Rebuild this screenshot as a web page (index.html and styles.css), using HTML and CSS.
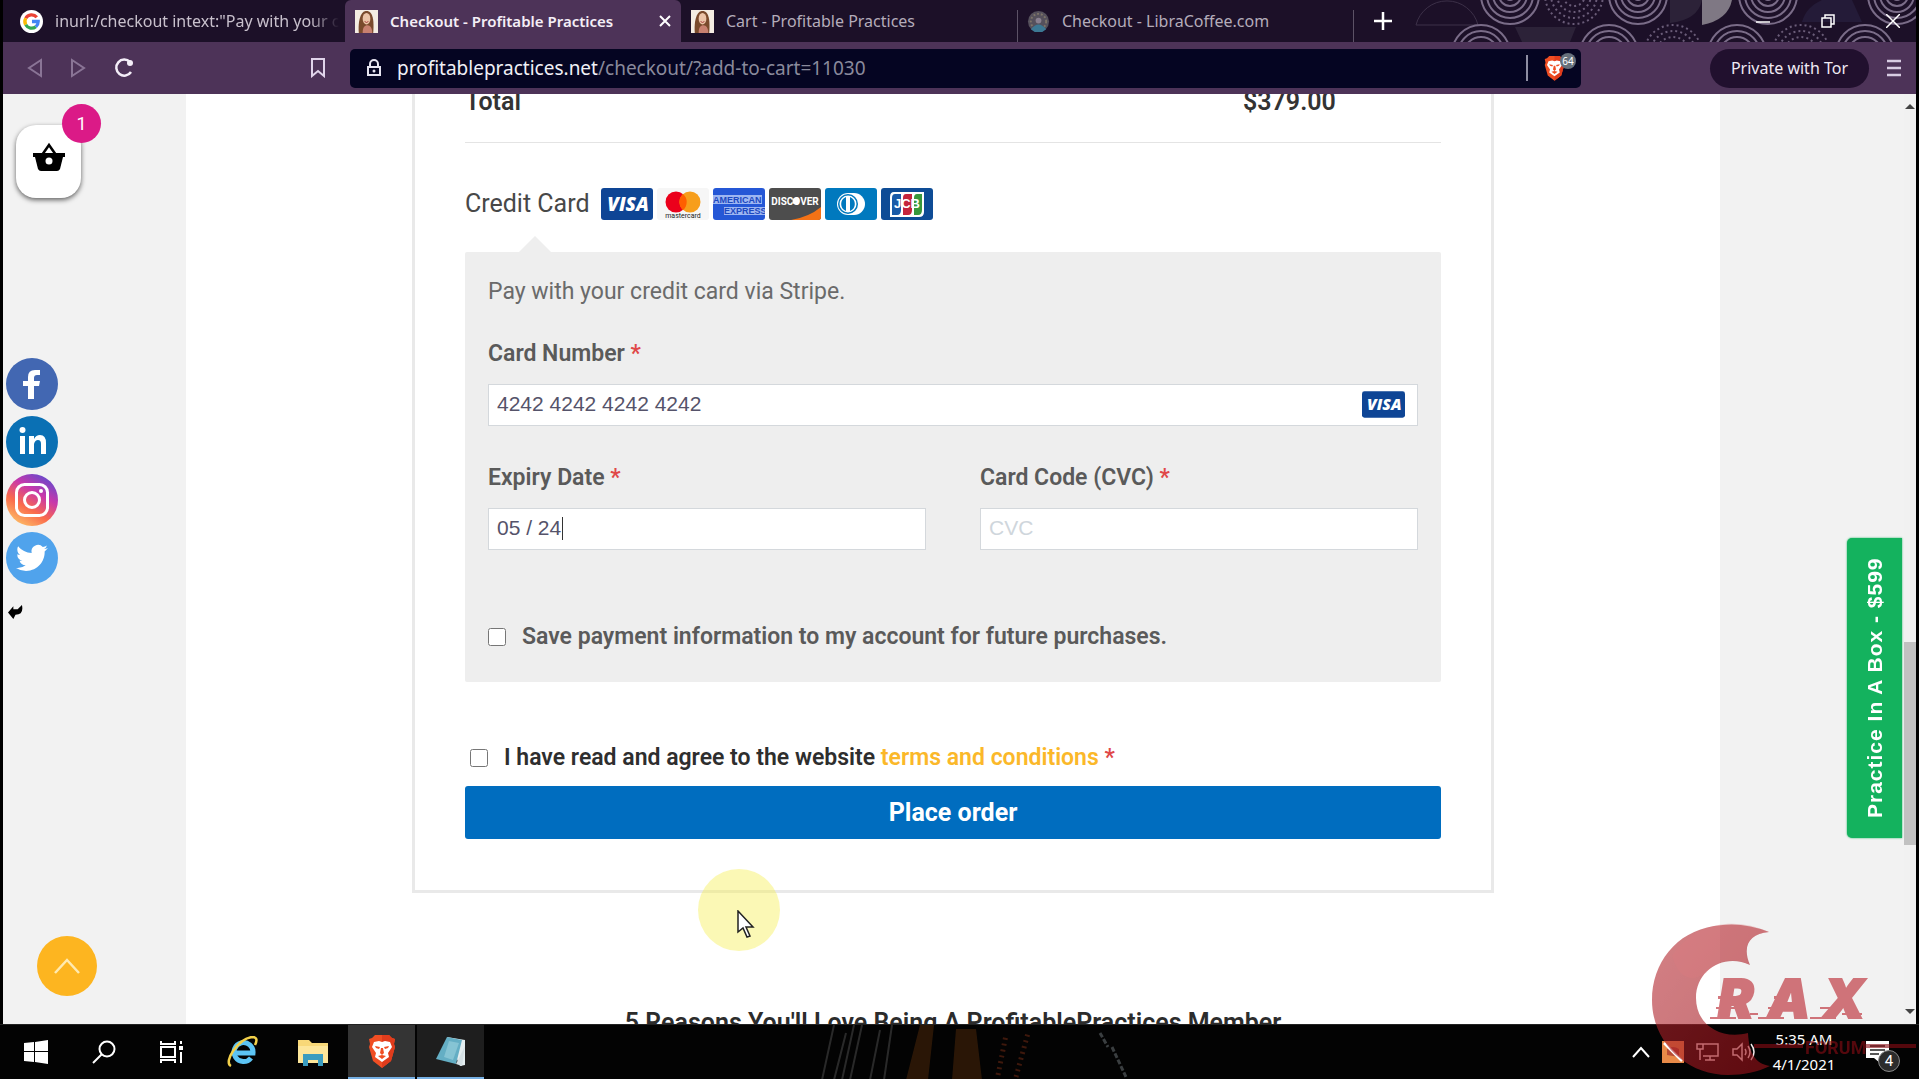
FILE: index.html
```html
<!DOCTYPE html>
<html lang="en">
<head>
  <meta charset="UTF-8">
  <meta name="viewport" content="width=device-width, initial-scale=1.0">
  <title>Checkout - Profitable Practices</title>
  <link rel="stylesheet" href="styles.css">
</head>
<body>
<!-- shared symbols -->
<svg class="defs" width="0" height="0" aria-hidden="true">
  <defs>
    <symbol id="portrait" viewBox="0 0 24 24">
      <rect width="24" height="24" fill="#f4ece2"/>
      <path d="M4 24C3 14 5 2 11 1c8-1 9 10 8 23z" fill="#7a4a2c"/>
      <ellipse cx="12" cy="9" rx="4" ry="6" fill="#ecc4a8"/>
      <path d="M8 24c0-6 2-8 5-8s5 3 5 8z" fill="#c88070"/>
      <path d="M10 12q2 2 4 0" stroke="#a03838" fill="none"/>
    </symbol>
    <symbol id="visa" viewBox="0 0 52 32">
      <rect width="52" height="32" rx="3" fill="#0e4595"/>
      <text x="27" y="23" text-anchor="middle" font-family="Open Sans, sans-serif" font-size="19" font-weight="800" font-style="italic" fill="#fff">VISA</text>
    </symbol>
    <symbol id="lion" viewBox="0 0 28 34">
      <path d="M7 1h14l3 3 3 1-1 5 1 3-4 14-9 7-9-7L1 13l1-3-1-5 3-1z" fill="#f04e23"/>
      <path d="M14 1h7l3 3 3 1-1 5 1 3-4 14-9 7z" fill="#e03c1c"/>
      <path d="M6 8l5-1 3 1 3-1 5 1 2 5-4 6 1 4-7 5-7-5 1-4-4-6z" fill="#fff"/>
      <path d="M7 12l5 1-1 2-3-1zM21 12l-5 1 1 2 3-1zM13 14l-1 5 2 2 2-2-1-5zM10 22l4-1 4 1-4 3z" fill="#f04e23"/>
    </symbol>
  </defs>
</svg>

<div class="desktop">
  <div class="browser">
    <nav class="tabs">
      <a class="tab" href="#">
        <svg class="favicon" viewBox="0 0 24 24">
          <circle cx="12" cy="12" r="12" fill="#fff"/>
          <g fill="none" stroke-width="3.4">
            <path d="M17.500 7.500A7 7 0 0 0 6 8.600" stroke="#ea4335"/>
            <path d="M6 8.600a7 7 0 0 0 0 6.800" stroke="#fbbc05"/>
            <path d="M6 15.400a7 7 0 0 0 10.500 2" stroke="#34a853"/>
            <path d="M16.500 17.400A7 7 0 0 0 19 12h-6.500" stroke="#4285f4"/>
          </g>
        </svg>
        <span class="tab-text fade">inurl:/checkout intext:"Pay with your cr</span>
      </a>
      <a class="tab active" href="#">
        <svg class="favicon"><use href="#portrait"/></svg>
        <span class="tab-text">Checkout - Profitable Practices</span>
        <svg class="tab-close" viewBox="0 0 12 12"><path d="M1 1l10 10M11 1L1 11" stroke="#fff" stroke-width="2"/></svg>
      </a>
      <a class="tab" href="#">
        <svg class="favicon"><use href="#portrait"/></svg>
        <span class="tab-text">Cart - Profitable Practices</span>
      </a>
      <a class="tab line" href="#">
        <svg class="favicon" viewBox="0 0 24 24">
          <circle cx="12" cy="12" r="11" fill="#55505c"/>
          <circle cx="12" cy="12" r="8" fill="none" stroke="#7d7468" stroke-width="2" stroke-dasharray="2 2"/>
          <path d="M4 20q8-10 16 0l-4 3H8z" fill="#3c7894"/>
          <circle cx="12" cy="11" r="3" fill="#8a8090"/>
        </svg>
        <span class="tab-text">Checkout - LibraCoffee.com</span>
      </a>
      <div class="strip line">
        <svg class="pattern" viewBox="0 0 564 42" preserveAspectRatio="xMaxYMid slice">
          <defs>
            <g id="rings" fill="none" stroke="#7a6c88" stroke-width="2"><circle r="29"/><circle r="23"/><circle r="17"/><circle r="11"/><circle r="5"/></g>
            <g id="dots" fill="none" stroke="#6a5c78" stroke-width="2" stroke-dasharray="2 3"><circle r="29"/><circle r="23"/><circle r="17"/><circle r="11"/></g>
          </defs>
          <path d="M64 25a32 32 0 0 1 62 0z" fill="none" stroke="#3c3048"/>
          <path d="M163 27h61l-6 15h-48zM318 0h32q-4 20-32 23z" fill="#2c2238"/>
          <path d="M350 25V0h30q-4 20-30 25z" fill="#7f7884"/>
          <path d="M450 22q4-15 20-22h30l10 22z" fill="#241b38"/>
          <use href="#rings" x="158" y="-5"/><use href="#dots" x="222" y="-5"/><use href="#rings" x="286" y="-5"/>
          <use href="#rings" x="416" y="-5"/><use href="#rings" x="545" y="-5"/>
          <use href="#rings" x="129" y="54"/><use href="#rings" x="257" y="54"/><use href="#dots" x="321" y="54"/>
          <use href="#rings" x="385" y="54"/><use href="#dots" x="449" y="54"/><use href="#rings" x="513" y="54"/>
        </svg>
        <button class="icon-btn" aria-label="New tab"><svg width="18" height="18" viewBox="0 0 18 18"><path d="M9 0v18M0 9h18" stroke="#fff" stroke-width="2.500"/></svg></button>
        <div class="window-btns">
          <button class="icon-btn" aria-label="Minimize"><svg width="14" height="14" viewBox="0 0 14 14"><path d="M0 8h14" stroke="#fff" stroke-width="1.500"/></svg></button>
          <button class="icon-btn" aria-label="Restore"><svg width="14" height="14" viewBox="0 0 14 14"><path d="M1 4h9v9H1zM4 4V1h9v9h-3" fill="none" stroke="#fff" stroke-width="1.500"/></svg></button>
          <button class="icon-btn" aria-label="Close"><svg width="14" height="14" viewBox="0 0 14 14"><path d="M0 0l14 14M14 0L0 14" stroke="#fff" stroke-width="1.500"/></svg></button>
        </div>
      </div>
    </nav>

    <div class="toolbar">
      <div class="nav-btns">
        <button class="icon-btn" aria-label="Back"><svg width="16" height="20" viewBox="0 0 16 20"><path d="M14 2v16L2 10z" fill="none" stroke="#8a7596" stroke-width="2"/></svg></button>
        <button class="icon-btn" aria-label="Forward"><svg width="16" height="20" viewBox="0 0 16 20"><path d="M2 2v16l12-8z" fill="none" stroke="#8a7596" stroke-width="2"/></svg></button>
        <button class="icon-btn" aria-label="Reload"><svg width="22" height="20" viewBox="0 0 22 20"><path d="M17 4A8 8 0 1 0 18 14" fill="none" stroke="#f4eef8" stroke-width="2.500"/><circle cx="17" cy="5" r="3" fill="#f4eef8"/></svg></button>
        <button class="icon-btn bookmark" aria-label="Bookmark"><svg width="14" height="20" viewBox="0 0 14 20"><path d="M1 1h12v17l-6-5-6 5z" fill="none" stroke="#e0d4ea" stroke-width="2"/></svg></button>
      </div>
      <div class="address">
        <svg width="16" height="18" viewBox="0 0 16 18"><path d="M4 7V5a4 4 0 0 1 8 0v2" fill="none" stroke="#e6e4f0" stroke-width="2"/><path d="M2 8h12v8H2z" fill="none" stroke="#e6e4f0" stroke-width="2"/><circle cx="8" cy="12" r="1.500" fill="#e6e4f0"/></svg>
        <span class="url"><b>profitablepractices.net</b>/checkout/?add-to-cart=11030</span>
        <div class="shield">
          <svg width="21" height="26"><use href="#lion"/></svg>
          <span class="shield-count">64</span>
        </div>
      </div>
      <div class="profile">
        <button class="tor">Private with Tor</button>
        <button class="icon-btn" aria-label="Menu"><svg width="14" height="18" viewBox="0 0 14 18"><path d="M0 2h14M0 9h14M0 16h14" stroke="#d8cce2" stroke-width="2.500"/></svg></button>
      </div>
    </div>

    <main class="page">
      <div class="content">
        <form class="order" onsubmit="return false">
          <div class="total"><span>Total</span><span class="amount">$379.00</span></div>

          <div class="method">
            <span>Credit Card</span>
            <div class="cards">
              <svg><use href="#visa"/></svg>
              <svg viewBox="0 0 52 32">
                <rect width="52" height="32" rx="3" fill="#f6f6f6"/>
                <circle cx="19" cy="14" r="10.500" fill="#eb001b"/><circle cx="33" cy="14" r="10.500" fill="#f79e1b"/>
                <path d="M26 6a10.500 10.500 0 0 1 0 16 10.500 10.500 0 0 1 0-16z" fill="#ff5f00"/>
                <text x="26" y="30" text-anchor="middle" font-family="Roboto, sans-serif" font-size="7" fill="#222">mastercard</text>
              </svg>
              <svg viewBox="0 0 52 32">
                <rect width="52" height="32" rx="3" fill="#2557d6"/>
                <path d="M0 7h49v9H0zM11 19h41v8H11z" fill="#9db6f2"/>
                <g font-family="Liberation Sans, sans-serif" font-size="9" font-weight="700" fill="#1c48c0">
                  <text x="0" y="15">AMERICAN</text><text x="11" y="26">EXPRESS</text>
                </g>
              </svg>
              <svg viewBox="0 0 52 32">
                <rect width="52" height="32" rx="3" fill="#4d4d4d"/>
                <path d="M22 32q18-3 30-13v10q0 3-3 3z" fill="#f47216"/>
                <text x="26" y="17" text-anchor="middle" font-family="Roboto, sans-serif" font-size="10" font-weight="700" fill="#fff">DISCOVER</text>
                <circle cx="27" cy="13" r="3.500" fill="#fff"/>
              </svg>
              <svg viewBox="0 0 52 32">
                <rect width="52" height="32" rx="3" fill="#0079be"/>
                <path d="M23 5h6a11 11 0 0 1 0 22h-6a11 11 0 0 1 0-22z" fill="#fff"/>
                <circle cx="23" cy="16" r="10" fill="#0079be"/><circle cx="23" cy="16" r="8.500" fill="#fff"/>
                <path d="M21 9a7.500 7.500 0 0 0 0 14zM25 9a7.500 7.500 0 0 1 0 14z" fill="#0079be"/>
              </svg>
              <svg viewBox="0 0 52 32">
                <rect width="52" height="32" rx="3" fill="#0e4c96"/>
                <path d="M13 4h30v20q0 5-5 5H9V9q0-5 4-5z" fill="#fff"/>
                <path d="M14 6h6v16q0 5-4 5h-5V10q0-4 3-4z" fill="#1a5ba8"/><path d="M25 6h6v16q0 5-4 5h-5V10q0-4 3-4z" fill="#c4243c"/><path d="M36 6h5v16q0 5-4 5h-4V10q0-4 3-4z" fill="#38983c"/>
                <text x="26" y="20" text-anchor="middle" font-family="Liberation Sans, sans-serif" font-size="13" font-weight="700" fill="#fff">JCB</text>
              </svg>
            </div>
          </div>

          <div class="payment">
            <p class="via">Pay with your credit card via Stripe.</p>
            <div class="field">
              <label for="card-number">Card Number <em>*</em></label>
              <div class="input-wrap">
                <input type="text" id="card-number" value="4242 4242 4242 4242">
                <svg class="brand"><use href="#visa"/></svg>
              </div>
            </div>
            <div class="row">
              <div class="field">
                <label for="expiry">Expiry Date <em>*</em></label>
                <div class="input-wrap">
                  <input type="text" id="expiry" value="05 / 24">
                  <span class="caret"></span>
                </div>
              </div>
              <div class="field">
                <label for="cvc">Card Code (CVC) <em>*</em></label>
                <input type="text" id="cvc" placeholder="CVC">
              </div>
            </div>
            <div class="check">
              <input type="checkbox" id="save"><label for="save">Save payment information to my account for future purchases.</label>
            </div>
          </div>

          <div class="check terms">
            <input type="checkbox" id="terms"><label for="terms">I have read and agree to the website <a href="#">terms and conditions</a> <em>*</em></label>
          </div>
          <button class="place">Place order</button>
        </form>
        <h2>5 Reasons You'll Love Being A ProfitablePractices Member</h2>
      </div>

      <button class="basket" aria-label="Basket">
        <svg width="34" height="30" viewBox="0 0 34 30"><path d="M10 13l7-10 7 10" fill="none" stroke="#000" stroke-width="2.500"/><path d="M1 11h32v4h-2l-3 12q-1 2-3 2H9q-2 0-3-2L3 15H1z"/><circle cx="17" cy="19" r="3.500" fill="#fff"/></svg>
        <span class="count">1</span>
      </button>

      <div class="social">
        <a href="#" aria-label="Facebook"><svg viewBox="0 0 52 52"><circle cx="26" cy="26" r="26" fill="#4267b2"/><path d="M22 41V28h-5v-5h5v-4q0-7 7-7h5v5h-3q-3 0-3 3v3h6l-1 5h-5v13z" fill="#fff"/></svg></a>
        <a href="#" aria-label="LinkedIn"><svg viewBox="0 0 52 52"><circle cx="26" cy="26" r="26" fill="#0a70b4"/><path d="M14 20h5v18h-5zM23 20h5v3q2-4 6-4 6 0 6 8v11h-5V28q0-4-3-4t-4 4v10h-5z" fill="#fff"/><circle cx="16.500" cy="14" r="3" fill="#fff"/></svg></a>
        <a href="#" aria-label="Instagram"><svg viewBox="0 0 52 52">
          <defs><linearGradient id="insta" x1="0.200" y1="1" x2="0.800" y2="0"><stop offset="0" stop-color="#fdc468"/><stop offset="0.350" stop-color="#fa6a4c"/><stop offset="0.650" stop-color="#c837ab"/><stop offset="1" stop-color="#5a4cd0"/></linearGradient></defs>
          <circle cx="26" cy="26" r="26" fill="url(#insta)"/><rect x="10.500" y="10.500" width="31" height="31" rx="8" fill="none" stroke="#fff" stroke-width="3"/><circle cx="26" cy="26" r="7.500" fill="none" stroke="#fff" stroke-width="3"/><circle cx="35" cy="17" r="2" fill="#fff"/></svg></a>
        <a href="#" aria-label="Twitter"><svg viewBox="0 0 52 52"><circle cx="26" cy="26" r="26" fill="#50a3ec"/><path transform="translate(10 10) scale(1.330)" fill="#fff" d="M23.950 4.570a10 10 0 0 1-2.820.780 4.960 4.960 0 0 0 2.160-2.720c-.95.550-2 .950-3.130 1.180a4.920 4.920 0 0 0-8.380 4.480C7.690 8.090 4.070 6.130 1.640 3.160a4.820 4.820 0 0 0-.67 2.480c0 1.710.87 3.210 2.190 4.090a4.900 4.900 0 0 1-2.230-.61v.06a4.920 4.920 0 0 0 3.950 4.830 5 5 0 0 1-2.210.08 4.940 4.940 0 0 0 4.600 3.420A9.870 9.870 0 0 1 0 19.540a13.990 13.990 0 0 0 7.550 2.210c9.050 0 14-7.500 14-13.980 0-.21 0-.42-.02-.63a9.940 9.940 0 0 0 2.460-2.550z"/></svg></a>
        <svg class="hide" viewBox="0 0 14 14"><path d="M0 8l5-6v3h4l4-4q2 9-6 9l-2 4z"/></svg>
      </div>

      <button class="to-top" aria-label="Back to top"><svg width="28" height="18" viewBox="0 0 28 18"><path d="M2 16L14 3l12 13" fill="none" stroke="#ffeab0" stroke-width="2.500"/></svg></button>
      <a class="promo" href="#">Practice In A Box - $599</a>
      <div class="scrollbar"><span class="up"></span><span class="thumb"></span><span class="down"></span></div>
      <div class="pointer"><svg width="20" height="30" viewBox="0 0 20 30"><path d="M1 1v21l5-4 4 9 3-1-4-9h7z" fill="#fff" stroke="#222" stroke-width="1.500"/></svg></div>
    </main>
  </div>

  <footer class="taskbar">
    <svg class="wallpaper" viewBox="0 0 400 55" preserveAspectRatio="none">
      <g stroke="#3a3a3a" stroke-width="2"><path d="M12 55L24 0M24 55L36 8M32 55L44 0M40 55L52 0M60 55l10-50M74 55L82 0" opacity="0.700"/></g>
      <path d="M96 55L110 0h14l-6 55zM142 55l4-51h20l6 51z" fill="#3c2008" opacity="0.700"/>
      <path d="M188 50l8-40M206 52l12-44" stroke="#3e180c" stroke-width="5" stroke-dasharray="2 4"/>
      <path d="M290 8l8 14M302 22l14 30" stroke="#3a3e40" stroke-width="3" stroke-dasharray="5 2"/>
    </svg>
    <div class="apps">
      <button class="app" aria-label="Start"><svg width="24" height="24" viewBox="0 0 24 24"><path d="M0 3l10-1v9H0zM11 2l13-2v11H11zM0 12h10v10L0 21zM11 12h13v12l-13-2z" fill="#fff"/></svg></button>
      <button class="app" aria-label="Search"><svg width="24" height="24" viewBox="0 0 24 24"><circle cx="15" cy="9" r="7.500" fill="none" stroke="#fff" stroke-width="2"/><path d="M9.500 14.500L1 23" stroke="#fff" stroke-width="2"/></svg></button>
      <button class="app" aria-label="Task view"><svg width="24" height="24" viewBox="0 0 24 24"><path d="M1 1v3h14V1M1 7h14v10H1zM1 23v-3h14v3M21 1v3M21 12v11" fill="none" stroke="#fff" stroke-width="2"/><path d="M19 6h4v4h-4z" fill="#fff"/></svg></button>
      <button class="app wide" aria-label="Internet Explorer"><svg width="32" height="32" viewBox="0 0 32 32"><path d="M25 22A9.500 9.500 0 1 1 27 17H9" fill="none" stroke="#5cc4f4" stroke-width="5"/><path d="M5 30C-3 26 12 3 26 1q7 0 3 8" fill="none" stroke="#f2d04a" stroke-width="2.500"/></svg></button>
      <button class="app wide" aria-label="File Explorer"><svg width="30" height="28" viewBox="0 0 30 28"><path d="M0 2h11l3 3h16v20H0z" fill="#f8d878"/><path d="M0 8h30v17H0z" fill="#fde69a"/><path d="M5 28V16h20v12h-5v-6H10v6z" fill="#3a9cc0"/></svg></button>
      <button class="app open current" aria-label="Brave"><svg width="28" height="34"><use href="#lion"/></svg></button>
      <button class="app open" aria-label="Notepad"><svg width="32" height="32" viewBox="0 0 32 32"><path d="M12 2l18 3v25l-5 1z" fill="#e4eef0"/><path d="M12 2l15 3-6 24L1 24z" fill="#64aec4"/><path d="M14 6l10 2-6 17-9-3z" fill="#a8dae4" opacity="0.500"/><path d="M21 29l6 2 3-20" fill="#d4e0e4"/></svg></button>
    </div>
    <div class="tray">
      <svg width="18" height="12" viewBox="0 0 18 12"><path d="M1 11l8-9 8 9" fill="none" stroke="#fff" stroke-width="2"/></svg>
      <svg width="22" height="22" viewBox="0 0 22 22"><rect width="22" height="22" fill="#e88a48"/><path d="M5 14V8q6-4 12 0v8z" fill="#b84c34"/><path d="M2 2l18 18" stroke="#fff" stroke-width="2.500"/></svg>
      <svg width="24" height="20" viewBox="0 0 24 20"><path d="M7 2h15v12H7M14 14v4M9 18h10M1 2h6v5H1zM4 7v11" fill="none" stroke="#f0e4e4" stroke-width="1.500"/></svg>
      <svg width="24" height="20" viewBox="0 0 24 20"><path d="M1 7h4l5-5v16l-5-5H1zM13 7q2 3 0 6M16 4q4 6 0 12M19 2q6 8 0 16" fill="none" stroke="#f4eaea" stroke-width="1.500"/></svg>
      <div class="clock"><span>5:35 AM</span><span>4/1/2021</span></div>
      <div class="notify">
        <svg width="23" height="22" viewBox="0 0 23 22"><path d="M0 0h23v17h-9v5l-6-5H0z" fill="#fff"/><path d="M4 5h15M4 9h15M4 13h9" stroke="#222" stroke-width="1.500"/></svg>
        <span class="notify-count">4</span>
      </div>
    </div>
  </footer>

  <svg class="watermark" viewBox="0 0 265 154">
    <defs>
      <linearGradient id="crescent" x1="0" y1="0" x2="1" y2="1"><stop offset="0" stop-color="#b82c34"/><stop offset="1" stop-color="#9c1018"/></linearGradient>
    </defs>
    <g opacity="0.600">
      <path d="M117 9Q90-2 62 3C24 9 0 40 0 77c0 42 34 75 76 75 15 0 30-3 42-9-14-2-21-12-22-33-27 7-52-8-52-35 0-28 28-45 54-33-8-19-1-31 19-33z" fill="url(#crescent)"/>
      <path d="M20 33c8 26 22 25 34 17 10-13 26-17 42-9-7-17 0-30 21-32C82-7 42 0 20 33z" fill="#c8242c" opacity="0.300"/>
      <g fill="#b8202a" stroke="#b8202a" stroke-width="2" font-family="Inter, Liberation Sans, sans-serif" font-size="53" font-weight="900" font-style="italic">
        <text x="66" y="95">R</text><text x="116" y="95">A</text><text x="171" y="95">X</text>
      </g>
      <path d="M58 94h26v2H58zM106 94h26v2h-26zM158 94h26v2h-26zM64 84h20v2H64zM66 73h14v3H66zM116 84h18v2h-18zM122 73h12v3h-12zM168 84h18v2h-18zM190 90h20v2h-20zM98 90h8v2h-8z" fill="#b8202a"/>
      <path d="M102 121h49v4h-49zM211 121h53v4h-53z" fill="#8c0c14"/>
      <text x="153" y="131" font-family="Roboto, sans-serif" font-size="18" font-weight="700" fill="#8c0c14">FORUM</text>
    </g>
  </svg>
</div>
</body>
</html>
```

FILE: styles.css
```css
* { box-sizing: border-box; }
body { margin: 0; background: #000; font-family: Roboto, sans-serif; }
button { padding: 0; border: none; background: none; font-family: inherit; cursor: pointer; }
a { text-decoration: none; }
svg { display: block; flex: none; }
.defs { position: absolute; }

.desktop {
  position: relative;
  display: flex; flex-direction: column;
  height: 100vh;
  overflow: hidden;
}
.browser {
  flex: 1; min-height: 0;
  display: flex; flex-direction: column;
  padding: 0 3px;
}

/* tab strip */
.tabs {
  display: flex;
  height: 42px;
  background: #1c1028;
  font-family: "Noto Sans", sans-serif;
  font-size: 16px;
}
.tab {
  position: relative;
  display: flex; align-items: center; gap: 12px;
  width: 336px;
  padding: 0 10px;
  color: #b4acba;
}
.tab:first-child { width: 342px; padding: 0 0 0 17px; }
.tab.active {
  background: #4d3358;
  color: #f4eef6;
  font-weight: 600;
  border-radius: 6px 6px 0 0;
}
.tab.active { font-size: 15px; }
.line::before {
  content: "";
  position: absolute; left: 0; top: 10px; bottom: 0;
  width: 1px; background: #5c5266;
}
.favicon { width: 23px; height: 23px; }
.tab-text { flex: 1; overflow: hidden; white-space: nowrap; }
.fade {
  color: #c8c0cc;
  -webkit-mask-image: linear-gradient(90deg, #000 88%, transparent 98%);
  mask-image: linear-gradient(90deg, #000 88%, transparent 98%);
}
.tab-close { width: 12px; height: 12px; }
.strip {
  flex: 1;
  position: relative;
  display: flex; align-items: center; justify-content: space-between;
  padding: 0 16px 0 21px;
  overflow: hidden;
}
.pattern { position: absolute; top: 0; right: 0; width: 564px; height: 42px; }
.icon-btn { position: relative; display: flex; }
.window-btns { display: flex; gap: 51px; }

/* toolbar */
.toolbar {
  display: flex; align-items: center;
  height: 52px;
  padding: 0 15px 0 24px;
  background: #4d3358;
  font-family: "Noto Sans", sans-serif;
}
.nav-btns { display: flex; align-items: center; gap: 27px; width: 323px; }
.bookmark { margin-left: auto; margin-right: 25px; }
.address {
  flex: 1;
  display: flex; align-items: center; gap: 15px;
  height: 39px;
  padding: 0 16px;
  background: #050522;
  border-radius: 5px;
}
.url { flex: 1; font-size: 19px; color: #8a8a9c; }
.url b { font-weight: 400; color: #f0f0f6; }
.shield {
  position: relative;
  padding-left: 16px;
  border-left: 2px solid #8e8ea2;
}
.shield-count {
  position: absolute; top: -2px; left: 32px;
  width: 16px; height: 16px;
  border-radius: 8px;
  background: #66707c;
  color: #fff;
  font-size: 10px; line-height: 16px; text-align: center;
}
.profile { display: flex; align-items: center; gap: 18px; margin-left: 129px; }
.tor {
  height: 39px;
  padding: 0 21px;
  border-radius: 20px;
  background: #21102e;
  color: #f0eaf4;
  font-size: 16px;
}

/* page */
.page {
  position: relative;
  flex: 1; min-height: 0;
  overflow: hidden;
  background: #f2f2f2;
}
.content {
  margin: 0 196px 0 183px;
  background: #fff;
}
.order {
  max-width: 1082px;
  margin: 0 auto;
  padding: 0 50px 51px;
  border: 3px solid #e9e9e9;
  border-top: none;
}
.total {
  display: grid;
  grid-template-columns: 778px 1fr;
  height: 49px;
  border-bottom: 1px solid #e4e4e4;
  color: #333;
  font-size: 25px; font-weight: 600; line-height: 16px;
}
.method {
  display: flex; align-items: center; gap: 11px;
  margin-top: 43px;
  color: #484848;
  font-size: 25px; line-height: 36px;
}
.cards { display: flex; gap: 4px; }
.cards svg { width: 52px; height: 32px; }
.payment {
  position: relative;
  margin-top: 30px;
  padding: 24px 23px 29px;
  background: #eee;
  border-radius: 2px;
  color: #5a5a5a;
}
.payment::before {
  content: "";
  position: absolute; top: -16px; left: 54px;
  border: 16px solid transparent;
  border-top: none;
  border-bottom-color: #eee;
}
.via { margin: 0 0 30px; font-size: 23px; line-height: 32px; color: #6a6a6a; }
.field { flex: 1; }
.field label { display: block; margin-bottom: 14px; }
label { font-size: 23px; line-height: 32px; font-weight: 600; }
em { font-style: normal; color: #e04848; }
.input-wrap { position: relative; }
input[type="text"] {
  display: block;
  width: 100%; height: 42px;
  padding: 0 8px 2px;
  border: 1px solid #d4d8dc;
  background: #fff;
  color: #55536a;
  font-family: "Liberation Sans", Arial, sans-serif;
  font-size: 21px;
}
input::placeholder { color: #cfd6dc; }
.brand { position: absolute; right: 13px; top: 7px; width: 43px; height: 27px; }
.caret { position: absolute; left: 74px; top: 9px; width: 1px; height: 23px; background: #333; }
.row { display: flex; gap: 54px; margin-top: 36px; }
.check { display: flex; align-items: center; gap: 16px; }
.check input { width: 18px; height: 18px; margin: 0; }
.payment .check { margin-top: 71px; }
.terms { margin: 60px 0 12px 5px; color: #2e2e2e; }
.terms a { color: #fbb829; }
.place {
  display: block;
  width: 100%; height: 53px;
  border-radius: 3px;
  background: #006dbf;
  color: #fff;
  font-size: 25px; font-weight: 700;
}
h2 {
  margin: 0;
  padding: 112px 0 30px;
  text-align: center;
  color: #2c2c2c;
  font-size: 25px; line-height: 36px; font-weight: 600;
}

/* floating widgets */
.basket {
  position: absolute; left: 13px; top: 31px;
  display: flex; align-items: center; justify-content: center;
  width: 65px; height: 73px;
  padding-bottom: 10px;
  border-radius: 20px;
  background: #fff;
  box-shadow: 0 2px 5px rgba(0, 0, 0, .6);
}
.count {
  position: absolute; top: -21px; right: -20px;
  width: 39px; height: 39px;
  border-radius: 50%;
  background: #db1a87;
  color: #fff;
  font-size: 18px; line-height: 39px;
}
.social {
  position: absolute; left: 3px; top: 264px;
  display: flex; flex-direction: column; gap: 6px;
}
.social a svg { width: 52px; height: 52px; }
.hide { width: 15px; height: 15px; margin: 14px 0 0 2px; }
.to-top {
  position: absolute; left: 34px; bottom: 28px;
  display: flex; align-items: center; justify-content: center;
  width: 60px; height: 60px;
  border-radius: 50%;
  background: #fdb520;
}
.promo {
  position: absolute; right: 14px; top: 444px;
  height: 300px; width: 55px;
  border-radius: 0 5px 5px 0;
  background: #14b25e;
  box-shadow: 0 0 2px #14b25e;
  color: #fff;
  font-family: "Liberation Sans", Arial, sans-serif;
  font-size: 21px; font-weight: 700; line-height: 55px; letter-spacing: 1px;
  text-align: center;
  writing-mode: vertical-rl;
  transform: rotate(180deg);
}
.scrollbar {
  position: absolute; top: 0; right: 0; bottom: 0;
  display: flex; flex-direction: column; align-items: center;
  width: 12px;
  padding: 10px 0;
  background: #f1f1f1;
}
.thumb { width: 12px; height: 203px; margin: 533px 0 auto; background: #c1c1c1; }
.up, .down { border: 5px solid transparent; border-top: none; border-bottom-color: #444; }
.down { border-top: 5px solid #444; border-bottom: none; }
.pointer {
  position: absolute; left: 695px; top: 775px;
  width: 82px; height: 82px;
  padding: 41px 0 0 39px;
  border-radius: 50%;
  background: rgba(245, 238, 70, .4);
}

/* taskbar */
.taskbar {
  position: relative;
  display: flex; justify-content: space-between;
  height: 55px;
  background: #030303;
  border-top: 1px solid #222;
}
.wallpaper { position: absolute; left: 810px; top: 0; width: 400px; height: 55px; }
.apps { display: flex; padding-left: 2px; }
.app { display: flex; align-items: center; justify-content: center; width: 68px; }
.wide { width: 71px; }
.open { width: 67px; margin-right: 2px; background: #1e1e1e; border-bottom: 2px solid #76b0e4; }
.current { background: #343434; }
.tray {
  position: relative;
  display: flex; align-items: center; gap: 12px;
  padding-right: 30px;
  color: #fff;
}
.clock {
  display: flex; flex-direction: column; align-items: center;
  width: 68px;
  margin: 0 16px 0 2px;
  font-family: "Noto Sans", sans-serif;
  font-size: 15px; line-height: 25px;
}
.notify { position: relative; }
.notify-count {
  position: absolute; left: 12px; top: 9px;
  width: 22px; height: 22px;
  border: 1px solid #888;
  border-radius: 50%;
  background: #2c2c2c;
  font-size: 15px; line-height: 20px; text-align: center;
}
.watermark {
  position: absolute; right: 2px; bottom: 2px;
  width: 265px; height: 154px;
  pointer-events: none;
}
```
